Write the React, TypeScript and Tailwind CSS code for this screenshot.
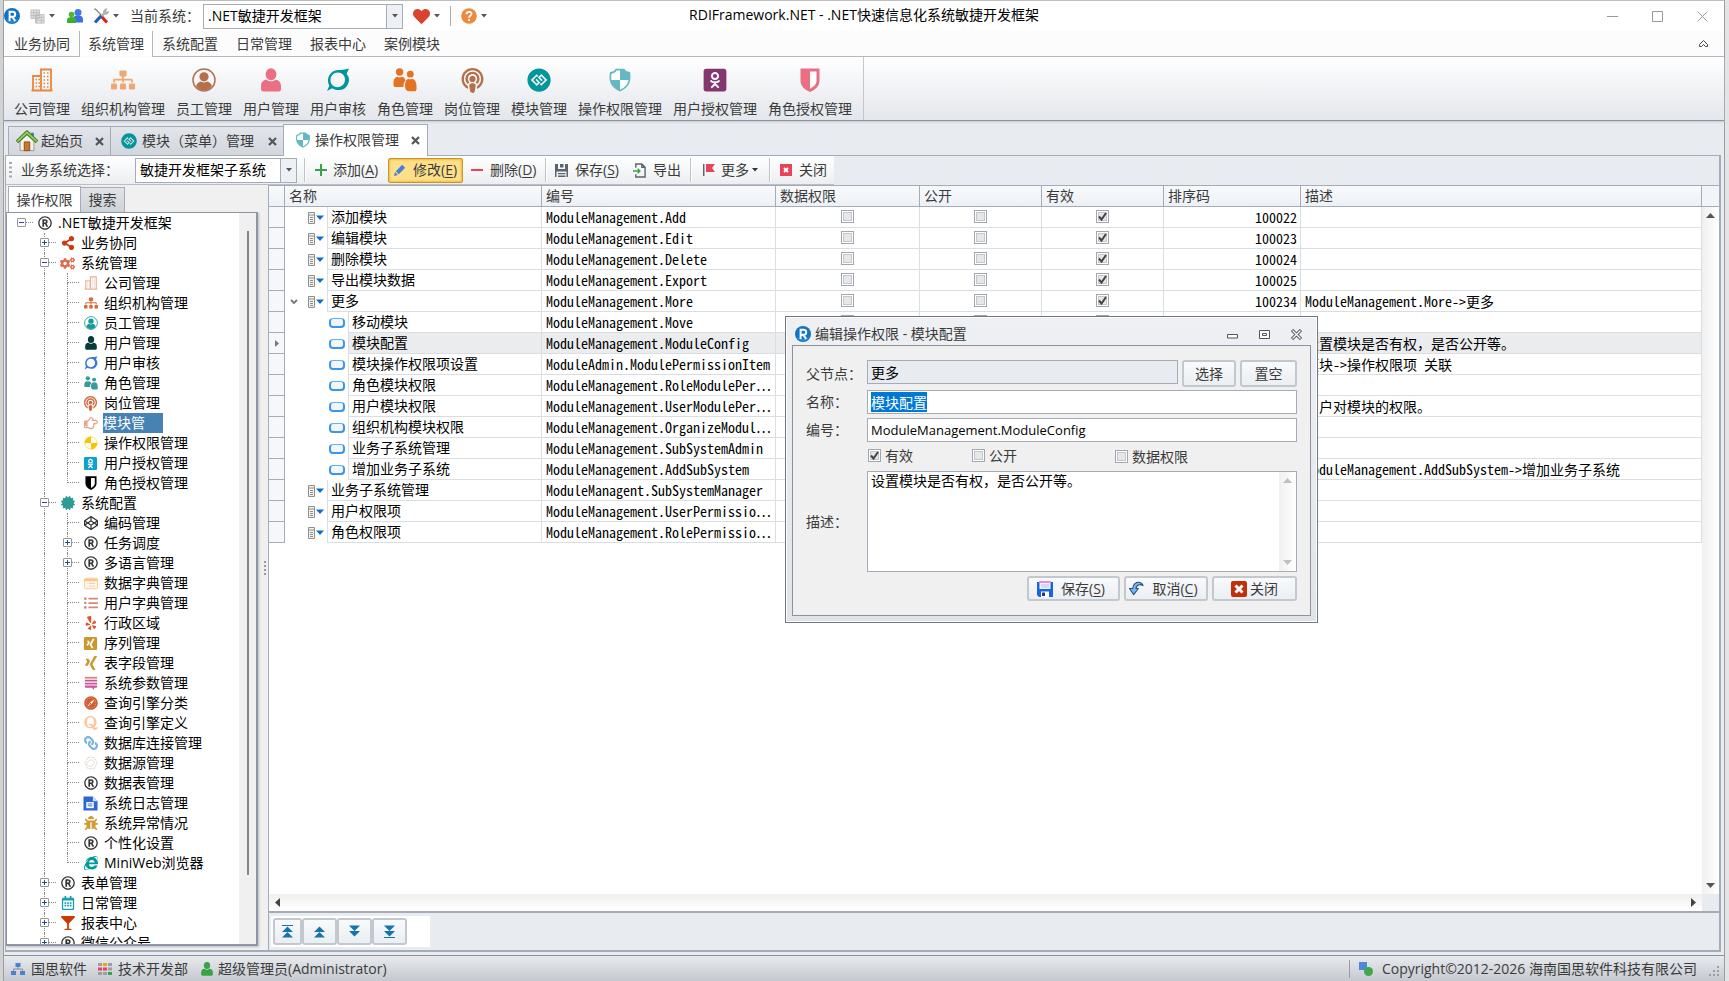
import React, { useEffect, useRef } from "react";
import {
  FaBug, FaCertificate, FaCodepen, FaCogs, FaGgCircle, FaGlassMartini, FaHeart, FaInternetExplorer, FaLink,
  FaListUl, FaOdnoklassnikiSquare, FaPodcast, FaQuora, FaRegCalendarAlt, FaRegHandPointRight, FaRegRegistered,
  FaSafari, FaShareAlt, FaSitemap, FaXing, FaXingSquare, FaYelp,
} from "react-icons/fa";

type P = { className?: string };

/* ---------- icons ---------- */
const Building = ({ className }: P) => (
  <svg viewBox="0 0 24 24" className={className} fill="none" stroke="currentColor" strokeWidth="1.8">
    <path d="M3 22.5V8h8M11 22.5V1.500h10V22.500M1.500 22.500h21" />
    <path strokeWidth="1.6" d="M5.500 11.500h1.500M8.500 11.500h1.500M5.500 15h1.500M8.500 15h1.500M5.500 18.500h1.500M8.500 18.500h1.500M13.500 5h1.500M17 5h1.500M13.500 8.500h1.500M17 8.500h1.500M13.500 12h1.500M17 12h1.500M13.500 15.500h1.500M17 15.500h1.500M13.500 19h1.500M17 19h1.500" />
  </svg>
);
const UserRing = ({ className }: P) => (
  <svg viewBox="0 0 24 24" className={className} fill="currentColor">
    <circle cx="12" cy="12" r="11" fill="none" stroke="currentColor" strokeWidth="1.500" />
    <circle cx="12" cy="8.800" r="4.600" />
    <path d="M4 18c1-3 3-4.300 5-4.600 2 1.500 4 1.500 6 0 2 .3 4 1.600 5 4.600-2 3-5 4.500-8 4.500S6 21 4 18z" />
  </svg>
);
const Person = ({ className }: P) => (
  <svg viewBox="0 0 24 24" className={className} fill="currentColor">
    <ellipse cx="12" cy="6.200" rx="5.400" ry="6" />
    <path d="M2 21v-3c0-4 2.500-6.300 5.500-6.300 2.700 2 6.300 2 9 0 3 0 5.500 2.300 5.500 6.300v3c0 1.700-1 2.500-2.500 2.500h-15C3 23.500 2 22.700 2 21z" />
  </svg>
);
const Swirl = ({ className }: P) => (
  <svg viewBox="0 0 24 24" className={className} fill="currentColor">
    <path fillRule="evenodd" d="M23 .5l-2.400 5.200A10 10 0 0 1 12 22c-2.200 0-4.200-.7-5.800-1.800L1 23l2.300-5.300A10.500 10.500 0 0 1 12 2c3 0 7-.2 11-1.500zM12 4.600c-4.500 0-7.500 3.500-7.500 7.600 0 4 3 7 7 7 4.300 0 7.500-3.400 7.500-7.600 0-4-3-7-7-7z" />
  </svg>
);
const TwoPeople = ({ className }: P) => (
  <svg viewBox="0 0 24 24" className={className} fill="currentColor">
    <circle cx="6.600" cy="4" r="3.700" />
    <circle cx="17.300" cy="6.200" r="3.400" />
    <path d="M.5 15c0-4 2-6 4-6.200 1.300.9 2.900.9 4.200 0 2 .2 3.300 1.600 3.800 3.600-1.500 1.500-2 3.300-2 6.600H2.500c-1.300 0-2-.7-2-2zM12 18c0-4.200 1.600-6.800 3.500-7.200 1.200.7 2.500.7 3.600 0 2.600.6 4.400 3 4.400 7.200v3c0 1.500-.8 2.300-2.200 2.300h-4.800C13.500 23.300 12 21.500 12 18z" />
  </svg>
);
const ShieldQuarter = ({ className }: P) => (
  <svg viewBox="0 0 24 24" className={className}>
    <path d="M7.500.8h9c.6 1.800 2 2.900 5.500 3.300 1.500 8 0 15.400-10 19.400C2 19.500.5 12.100 2 4.100 5.500 3.700 6.900 2.600 7.500.8z" fill="currentColor" />
    <path d="M12 2.500H8.500C7.800 4.200 6.300 5.300 3.500 5.700c-.4 2.200-.4 4.200-.1 6.300H12zM12 12v9.700c4.700-2 7.700-5.200 8.500-9.700z" fill="#fff" />
  </svg>
);
const CheckerBall = ({ className }: P) => (
  <svg viewBox="0 0 24 24" className={className}>
    <circle cx="12" cy="12" r="10.500" fill="#fff" stroke="currentColor" />
    <path d="M12 1v11H1A11 11 0 0 1 12 1zM12 23V12h11a11 11 0 0 1-11 11z" fill="currentColor" />
  </svg>
);
const HalfShield = ({ className }: P) => (
  <svg viewBox="0 0 24 24" className={className}>
    <path d="M2.500.5h19V13c0 5-4 8.500-9.500 11C6.500 21.500 2.500 18 2.500 13z" fill="currentColor" />
    <path d="M12 3.500h6.500V13c0 3.200-2.500 5.700-6.500 7.700z" fill="#fff" />
  </svg>
);
const DictWindow = ({ className }: P) => (
  <svg viewBox="0 0 16 16" className={className}>
    <rect x=".5" y="2.500" width="15" height="12" rx="1" fill="#fff8ee" stroke="#fbc58e" />
    <path d="M1 3h14v3H1z" fill="#fbc58e" />
    <path d="M3 8.500h1M5.500 8.500h7.500M3 11.500h1M5.500 11.500h7.500" stroke="#fbc58e" />
  </svg>
);
const Stack = ({ className }: P) => (
  <svg viewBox="0 0 16 16" className={className} fill="#c9569a">
    <path d="M1 1h14v2H1z" fill="#e0807c" /><path d="M1 4.300h14v2H1zM1 7.600h14v2H1zM1 10.900h14v1.300c0 .8-.6 1.200-1.500 1.200H12L10.500 16 9.500 13.400H2.500C1.600 13.400 1 13 1 12.200z" />
  </svg>
);
const Hexes = ({ className }: P) => (
  <svg viewBox="0 0 16 16" className={className} fill="none" stroke="#d8d0c6">
    <path strokeDasharray="3 1" d="M4.500 1.500h7L15 8l-3.500 6.500h-7L1 8z" /><path strokeWidth=".7" d="M5 6l4-2 3 3-2 4-4 1-3-3z" />
  </svg>
);
const LogFile = ({ className }: P) => (
  <svg viewBox="0 0 16 16" className={className}>
    <path d="M.5.500h10L15.500 5.500v10H.5z" fill="#2c66d0" /><path d="M10.500.500L15.500 5.500h-5z" fill="#cfe0ff" />
    <path d="M3.500 6.500h8v6.500h-8z" fill="#fff" /><path d="M5 8.500h5M5 10.500h5" stroke="#2c66d0" />
  </svg>
);
const LogoR = ({ className }: P) => (
  <svg viewBox="0 0 16 16" className={className}>
    <circle cx="8" cy="8" r="8" fill="#1173c4" />
    <path d="M2 11a7 7 0 0 0 12 0 8 8 0 0 1-12 0z" fill="#4db5f2" />
    <path d="M5.600 13V3.800h3.100a2.500 2.500 0 0 1 0 5H5.600M8.200 8.800l3 4" fill="none" stroke="#fff" strokeWidth="2" />
  </svg>
);
const Floppy = ({ className }: P) => (
  <svg viewBox="0 0 16 16" className={className}>
    <path d="M0 1h16v15H2l-2-2z" fill="#1668d8" /><path d="M2.500 0h11v8h-11z" fill="#f4f2fd" /><path d="M2 0h12v2H2z" fill="#e88fe4" />
    <path d="M4 4h8M4 6h8" stroke="#b9c2e2" /><path d="M4 10.500h8V16H4z" fill="#fff" /><path d="M5 11.500h3V15H5z" fill="#1b3d86" />
  </svg>
);
const Home = ({ className }: P) => (
  <svg viewBox="0 0 24 24" className={className}>
    <path d="M16.500 3h3v6h-3z" fill="#4f6fae" /><path d="M4.500 12L12 5l7.500 7v10.500h-15z" fill="#f5f2ec" stroke="#9c9384" />
    <path d="M9 13h6v9.500H9z" fill="#c8792c" stroke="#7f4b1c" /><path d="M1 13L12 2.500 23 13" fill="none" stroke="#3f7f22" strokeWidth="4.200" strokeLinejoin="round" /><path d="M1.500 12.500L12 2.500l10.500 10" fill="none" stroke="#97cf5a" strokeWidth="2" strokeLinejoin="round" />
  </svg>
);

const Caret = ({ className = "text-[#555]" }: P) => (
  <svg viewBox="0 0 6 4" className={`h-[4px] w-[6px] shrink-0 ${className}`}><path d="M0 0h6L3 3.500z" fill="currentColor" /></svg>
);
const TabClose = () => (
  <button aria-label="关闭标签" className="ml-auto"><svg viewBox="0 0 9 9" className="size-[9px]"><path d="M1 1l7 7M8 1L1 8" stroke="#50555e" strokeWidth="2.200" /></svg></button>
);
const Sep = () => <span className="h-[24px] w-[2px] border-l border-[#bfc3ca] bg-white" />;

/* ---------- form bits ---------- */
function Check({ checked, label }: { checked?: boolean; label?: string }) {
  return (
    <label className="inline-flex items-center gap-1">
      <span className="relative inline-grid size-[13px]">
        <input type="checkbox" aria-label={label ?? "选择"} defaultChecked={checked}
          className="size-[13px] appearance-none border border-[#a0a6b4] bg-[#e6e7e9] shadow-[inset_0_0_0_1px_#fff,inset_0_0_0_2px_#c6c6c2]" />
        {checked && (
          <svg viewBox="0 0 13 13" className="pointer-events-none absolute inset-0 size-[13px]"><path d="M3 6.500l2.500 3L10 3" fill="none" stroke="#444" strokeWidth="2" /></svg>
        )}
      </span>
      {label && <span>{label}</span>}
    </label>
  );
}
function Combo({ value, label, className }: { value: string; label: string; className: string }) {
  return (
    <span className={`flex h-[25px] border border-[#a5abb7] bg-white ${className}`}>
      <select aria-label={label} className="min-w-0 flex-1 appearance-none truncate pl-1 text-black outline-none"><option>{value}</option></select>
      <span className="flex w-[16px] items-center justify-center border-l border-[#a5abb7] bg-[#edf0f4]"><Caret /></span>
    </span>
  );
}
const Key = ({ k }: { k: string }) => <>(<u className="underline-offset-2">{k}</u>)</>;

/* ---------- data ---------- */
const menu = ["业务协同", "系统管理", "系统配置", "日常管理", "报表中心", "案例模块"];
const ribbon: [string, React.ReactNode][] = [
  ["公司管理", <Building className="size-[24px] text-[#e8873a]" />],
  ["组织机构管理", <FaSitemap className="size-[24px] text-[#f0a873]" />],
  ["员工管理", <UserRing className="size-[24px] text-[#b4704a]" />],
  ["用户管理", <Person className="size-[24px] text-[#eb6f83]" />],
  ["用户审核", <Swirl className="size-[24px] text-[#00969b]" />],
  ["角色管理", <TwoPeople className="size-[24px] text-[#e37222]" />],
  ["岗位管理", <FaPodcast className="size-[25px] text-[#b4704a]" />],
  ["模块管理", <FaGgCircle className="size-[24px] text-[#00969b]" />],
  ["操作权限管理", <ShieldQuarter className="size-[24px] text-[#63b9c1]" />],
  ["用户授权管理", <FaOdnoklassnikiSquare className="size-[26px] text-[#84366f]" />],
  ["角色授权管理", <HalfShield className="size-[24px] text-[#eb6f83]" />],
];
const Reg = () => <FaRegRegistered className="size-[14px] text-[#333]" />;
type Node = { t: string; l: 0 | 1 | 2; i: React.ReactNode; e?: "+" | "-"; last?: boolean; sel?: boolean };
const tree: Node[] = [
  { t: ".NET敏捷开发框架", l: 0, e: "-", i: <Reg /> },
  { t: "业务协同", l: 1, e: "+", i: <FaShareAlt className="size-[14px] text-[#cc3a14]" /> },
  { t: "系统管理", l: 1, e: "-", i: <FaCogs className="size-[15px] text-[#e0694a]" /> },
  { t: "公司管理", l: 2, i: <Building className="size-[14px] text-[#e6ae92]" /> },
  { t: "组织机构管理", l: 2, i: <FaSitemap className="size-[14px] text-[#d8693a]" /> },
  { t: "员工管理", l: 2, i: <UserRing className="size-[14px] text-[#1a9a9a]" /> },
  { t: "用户管理", l: 2, i: <Person className="size-[14px] text-[#063a3c]" /> },
  { t: "用户审核", l: 2, i: <Swirl className="size-[14px] text-[#3a78d4]" /> },
  { t: "角色管理", l: 2, i: <TwoPeople className="size-[14px] text-[#359b9b]" /> },
  { t: "岗位管理", l: 2, i: <FaPodcast className="size-[15px] text-[#cf6c44]" /> },
  { t: "模块管", l: 2, sel: true, i: <FaRegHandPointRight className="size-[14px] text-[#e6a68c]" /> },
  { t: "操作权限管理", l: 2, i: <CheckerBall className="size-[14px] text-[#fbc400]" /> },
  { t: "用户授权管理", l: 2, i: <FaOdnoklassnikiSquare className="size-[15px] text-[#10a0d0]" /> },
  { t: "角色授权管理", l: 2, last: true, i: <HalfShield className="size-[14px] text-black" /> },
  { t: "系统配置", l: 1, e: "-", i: <FaCertificate className="size-[14px] text-[#2f9a96]" /> },
  { t: "编码管理", l: 2, i: <FaCodepen className="size-[14px] text-[#333]" /> },
  { t: "任务调度", l: 2, e: "+", i: <Reg /> },
  { t: "多语言管理", l: 2, e: "+", i: <Reg /> },
  { t: "数据字典管理", l: 2, i: <DictWindow className="size-[14px]" /> },
  { t: "用户字典管理", l: 2, i: <FaListUl className="size-[14px] text-[#cf8a78]" /> },
  { t: "行政区域", l: 2, i: <FaYelp className="size-[14px] text-[#e2552c]" /> },
  { t: "序列管理", l: 2, i: <FaXingSquare className="size-[15px] text-[#cc982c]" /> },
  { t: "表字段管理", l: 2, i: <FaXing className="size-[16px] text-[#cc982c]" /> },
  { t: "系统参数管理", l: 2, i: <Stack className="size-[14px]" /> },
  { t: "查询引擎分类", l: 2, i: <FaSafari className="size-[14px] text-[#cf5c30]" /> },
  { t: "查询引擎定义", l: 2, i: <FaQuora className="size-[16px] text-[#fbc79c]" /> },
  { t: "数据库连接管理", l: 2, i: <FaLink className="size-[14px] -scale-x-100 text-[#78b4e0]" /> },
  { t: "数据源管理", l: 2, i: <Hexes className="size-[14px]" /> },
  { t: "数据表管理", l: 2, i: <Reg /> },
  { t: "系统日志管理", l: 2, i: <LogFile className="size-[15px]" /> },
  { t: "系统异常情况", l: 2, i: <FaBug className="size-[14px] text-[#d09a34]" /> },
  { t: "个性化设置", l: 2, i: <Reg /> },
  { t: "MiniWeb浏览器", l: 2, last: true, i: <FaInternetExplorer className="size-[14px] text-[#009a9a]" /> },
  { t: "表单管理", l: 1, e: "+", i: <Reg /> },
  { t: "日常管理", l: 1, e: "+", i: <FaRegCalendarAlt className="size-[14px] text-[#18a2b0]" /> },
  { t: "报表中心", l: 1, e: "+", i: <FaGlassMartini className="size-[14px] text-[#cc3a00]" /> },
  { t: "微信公众号", l: 1, e: "+", i: <Reg /> },
];
type Row = { n: string; c: string; s?: number; d?: string; child?: boolean; open?: boolean; on?: boolean };
const rows: Row[] = [
  { n: "添加模块", c: "ModuleManagement.Add", s: 100022 },
  { n: "编辑模块", c: "ModuleManagement.Edit", s: 100023 },
  { n: "删除模块", c: "ModuleManagement.Delete", s: 100024 },
  { n: "导出模块数据", c: "ModuleManagement.Export", s: 100025 },
  { n: "更多", c: "ModuleManagement.More", s: 100234, d: "ModuleManagement.More->更多", open: true },
  { n: "移动模块", c: "ModuleManagement.Move", child: true },
  { n: "模块配置", c: "ModuleManagement.ModuleConfig", child: true, on: true, d: "设置模块是否有权，是否公开等。" },
  { n: "模块操作权限项设置", c: "ModuleAdmin.ModulePermissionItem", child: true, d: "模块->操作权限项 关联" },
  { n: "角色模块权限", c: "ModuleManagement.RoleModulePer…", child: true },
  { n: "用户模块权限", c: "ModuleManagement.UserModulePer…", child: true, d: "用户对模块的权限。" },
  { n: "组织机构模块权限", c: "ModuleManagement.OrganizeModul…", child: true },
  { n: "业务子系统管理", c: "ModuleManagement.SubSystemAdmin", child: true },
  { n: "增加业务子系统", c: "ModuleManagement.AddSubSystem", child: true, d: "ModuleManagement.AddSubSystem->增加业务子系统" },
  { n: "业务子系统管理", c: "ModuleManagent.SubSystemManager" },
  { n: "用户权限项", c: "ModuleManagement.UserPermissio…" },
  { n: "角色权限项", c: "ModuleManagement.RolePermissio…" },
];

/* ---------- tree ---------- */
const dot = "border-dotted border-[#888]";
function Joint({ e, top = true, bottom = true }: { e?: string; top?: boolean; bottom?: boolean }) {
  return (
    <span className="relative grid h-full w-[23px] shrink-0 grid-cols-[11px_12px] grid-rows-2">
      <span />
      <span className={`border-b ${dot} ${top ? "border-l" : ""}`} />
      <span />
      <span className={`${dot} ${bottom ? "border-l" : ""}`} />
      {e && (
        <button aria-label="展开或折叠" className="absolute top-[5px] left-[7px] size-[9px] rounded-[1px] border border-[#969696] bg-white">
          <svg viewBox="0 0 7 7" className="size-[7px]"><path d={e === "+" ? "M1 3.500h5M3.500 1v5" : "M1 3.500h5"} stroke="#2b4a9b" /></svg>
        </button>
      )}
    </span>
  );
}
function Tree() {
  return (
    <ul className="min-h-0 min-w-0 flex-1 overflow-hidden pl-[3px]">
      {tree.map((n, i) => (
        <li key={i} className="flex h-[20px] items-center text-black">
          {n.l === 0 && <Joint e={n.e} top={false} bottom={false} />}
          {n.l > 0 && <span className="w-[23px] shrink-0" />}
          {n.l === 1 && <Joint e={n.e} />}
          {n.l === 2 && <span className="flex h-full w-[23px] shrink-0 justify-end"><span className={`w-[12px] border-l ${dot}`} /></span>}
          {n.l === 2 && <Joint e={n.e} bottom={!n.last} />}
          <span className="flex w-[23px] shrink-0 justify-center">{n.i}</span>
          {n.sel ? (
            <span className="ml-px h-[20px] w-[60px] bg-[#4682b4] text-white">{n.t}</span>
          ) : (
            <span className="ml-[2px] whitespace-nowrap">{n.t}</span>
          )}
        </li>
      ))}
    </ul>
  );
}

/* ---------- grid ---------- */
const ListIcon = () => (
  <svg viewBox="0 0 16 12" className="h-[12px] w-[16px] shrink-0">
    <path d="M.5.500h6v11h-6zM.5 3h6M2 5.500h3M2 7.500h3M2 9.500h3" fill="#f2f2f2" stroke="#8e8e8e" /><path d="M8 3.500H16L12 8z" fill="#0a6ed0" />
  </svg>
);
const PillIcon = () => <span className="h-[10px] w-[16px] shrink-0 rounded-[4px] border-2 border-t-1 border-[#3a96e8] border-t-[#5fb4f6] bg-[#f2f5fa]" />;

function Grid() {
  const h = "border-r border-b border-[#a5abb7] bg-linear-to-b from-[#f8f9fb] to-[#edf1f6] pl-1 text-left font-normal text-[#3b3b3b]";
  const c = "border-r border-b border-[#dadde1] p-0";
  const mono = "font-['Noto_Sans_Mono_CJK_JP','Noto_Sans_Mono_CJK_SC',monospace]";
  const sc = "font-['Noto_Sans_Mono_CJK_SC','Noto_Sans_CJK_SC',monospace]";
  return (
    <div className="flex min-h-0 flex-1">
      <div className="min-w-0 flex-1 overflow-hidden bg-white">
        <table className="w-full table-fixed border-separate border-spacing-0">
          <colgroup>
            <col className="w-[16px]" /><col className="w-[257px]" /><col className="w-[234px]" /><col className="w-[144px]" />
            <col className="w-[122px]" /><col className="w-[122px]" /><col className="w-[137px]" /><col />
          </colgroup>
          <thead>
            <tr className="h-[21px] leading-[18px]">
              <th className={h} aria-label="行标记" /><th className={h}>名称</th><th className={h}>编号</th><th className={h}>数据权限</th>
              <th className={h}>公开</th><th className={h}>有效</th><th className={h}>排序码</th><th className={h}>描述</th>
            </tr>
          </thead>
          <tbody className="leading-[18px] text-black">
            {rows.map((r, i) => {
              const bg = r.on ? "bg-[#ebecee]" : "";
              return (
                <tr key={i} className="h-[21px]">
                  <td className="border-r border-b border-[#a5abb7] bg-[#f5f7fa] p-0">
                    {r.on && <svg viewBox="0 0 4 7" className="mx-auto h-[7px] w-[4px]"><path d="M0 0l4 3.500L0 7z" fill="#777" /></svg>}
                  </td>
                  <td className="border-r border-[#dadde1] p-0">
                    <div className="flex h-[21px]">
                      <span className={`flex shrink-0 items-center justify-end ${r.child ? "w-[63px] pr-[3px]" : "w-[42px] pr-[3px]"}`}>
                        {r.open && <svg viewBox="0 0 8 6" className="mr-[10px] h-[6px] w-[8px]"><path d="M1 1l3 3 3-3" fill="none" stroke="#777" strokeWidth="1.800" /></svg>}
                        {r.child ? <PillIcon /> : <ListIcon />}
                      </span>
                      <span className={`flex-1 border-b border-l border-[#dadde1] pl-[3px] leading-[20px] whitespace-nowrap ${bg}`}>{r.n}</span>
                    </div>
                  </td>
                  <td className={`${c} ${bg} ${mono} overflow-hidden pl-1 whitespace-nowrap`}>{r.c}</td>
                  <td className={`${c} ${bg} text-center leading-none`}><Check /></td>
                  <td className={`${c} ${bg} text-center leading-none`}><Check /></td>
                  <td className={`${c} ${bg} text-center leading-none`}><Check checked /></td>
                  <td className={`${c} ${bg} ${sc} pr-[3px] text-right`}>{r.s}</td>
                  <td className={`${c} ${bg} ${sc} pl-1 whitespace-nowrap`}>{r.d}</td>
                </tr>
              );
            })}
          </tbody>
        </table>
      </div>
      <div className="flex w-[17px] flex-col bg-linear-to-r from-[#f0f0f0] to-white">
        <span className="h-[21px] border-b border-[#a5abb7] bg-[#f1f4f8]" />
        <svg viewBox="0 0 9 5" className="mx-auto mt-[6px] h-[5px] w-[9px]"><path d="M0 5h9L4.500 0z" fill="#555" /></svg>
        <svg viewBox="0 0 9 5" className="mx-auto mt-auto mb-[6px] h-[5px] w-[9px]"><path d="M0 0h9L4.500 5z" fill="#555" /></svg>
      </div>
    </div>
  );
}

function NavBar() {
  const b = "flex h-[27px] items-center justify-center rounded-[3px] border-2 border-[#c3c7ce] bg-linear-to-b from-[#f8fafc] to-[#ebeef2]";
  const up = "M5.500 0l5.500 5.500H0zM5.500 5.500L11 11H0z";
  return (
    <div className="h-[39px] border-t-2 border-[#a5abb7] bg-[#e8ebf0] pt-[3px] pl-[2px]">
      <div className="flex h-[31px] w-[159px] items-center bg-white pl-[2px]">
        {[["首行", up, true], ["上一行", up, false], ["下一行", up, false], ["末行", up, true]].map(([t, d, bar], i) => (
          <button key={i} aria-label={t as string} className={`${b} ${i === 0 ? "w-[29px]" : "w-[35px]"}`}>
            <svg viewBox="0 0 11 13" className={`h-[13px] w-[11px] ${i > 1 ? "rotate-180" : ""}`} fill="#1673ac">
              {bar && <path d="M0 0h11v1H0z" />}
              <path transform="translate(0 1.500)" d={d as string} />
            </svg>
          </button>
        ))}
      </div>
    </div>
  );
}

/* ---------- dialog ---------- */
function Dialog() {
  const name = useRef<HTMLInputElement>(null);
  useEffect(() => { name.current?.focus(); name.current?.select(); }, []);
  const f = "h-[24px] border border-[#a5abb7] bg-white px-[3px] text-black outline-none selection:bg-[#0078d7] selection:text-white";
  const b = "flex items-center justify-center rounded-[3px] border-2 border-[#c3c7ce] bg-linear-to-b from-[#f8fafc] to-[#ebeef2]";
  return (
    <div role="dialog" aria-label="编辑操作权限" className="absolute top-[316px] left-[785px] w-[533px] border border-[#71767f] bg-linear-to-b from-[#eef0f4] to-[#e0e4e9] px-[6px] pb-[6px] text-[#3b3b3b] shadow-[inset_0_0_0_1px_#fff]">
      <div className="flex h-[28px] items-center pt-[6px] pr-[9px] pl-[3px]">
        <LogoR className="size-[16px]" />
        <span className="ml-1">编辑操作权限 - 模块配置</span>
        <span className="ml-auto flex items-center gap-[21px]">
          <button aria-label="最小化"><svg viewBox="0 0 11 11" className="size-[11px]"><path d="M.5 5.500h10v3.500H.5z" fill="#fff" stroke="#555" /></svg></button>
          <button aria-label="最大化"><svg viewBox="0 0 11 11" className="size-[11px]"><path d="M.5 1.500h10v8H.5zM3.500 4.500h4v2h-4z" fill="#fff" stroke="#555" /></svg></button>
          <button aria-label="关闭窗口"><svg viewBox="0 0 11 11" className="size-[11px]"><path d="M1 1l9 9M10 1l-9 9" stroke="#555" strokeWidth="3.200" /><path d="M1.500 1.500l8 8M9.500 1.500l-8 8" stroke="#fff" strokeWidth="1.200" /></svg></button>
        </span>
      </div>
      <form className="grid grid-cols-[61px_1fr] items-center border border-[#8d929b] bg-[#f0f0f0] pt-[14px] pr-[13px] pb-[14px] pl-[13px]">
        <label htmlFor="parent">父节点：</label>
        <div className="flex items-start gap-1">
          <input id="parent" readOnly defaultValue="更多" className="h-[24px] min-w-0 flex-1 border border-[#a5abb7] bg-[#e8ebf0] px-[3px] text-black" />
          <button type="button" className={`${b} h-[27px] w-[54px]`}>选择</button>
          <button type="button" className={`${b} h-[27px] w-[57px]`}>置空</button>
        </div>
        <label htmlFor="name" className="mt-[3px]">名称：</label>
        <input id="name" ref={name} defaultValue="模块配置" className={`${f} mt-[3px]`} />
        <label htmlFor="code" className="mt-1">编号：</label>
        <input id="code" defaultValue="ModuleManagement.ModuleConfig" className={`${f} mt-1 text-[13px]`} />
        <div className="col-start-2 flex h-[29px] items-center pl-px">
          <span className="w-[104px]"><Check checked label="有效" /></span>
          <span className="w-[143px]"><Check label="公开" /></span>
          <Check label="数据权限" />
        </div>
        <label htmlFor="desc">描述：</label>
        <div className="flex h-[101px] border border-[#a5abb7] bg-white">
          <textarea id="desc" defaultValue="设置模块是否有权，是否公开等。" className="flex-1 resize-none overflow-hidden px-[3px] leading-[18px] text-black outline-none" />
          <div className="flex w-[17px] flex-col items-center justify-between bg-linear-to-r from-[#f0f0f0] to-white py-[6px]">
            <svg viewBox="0 0 9 5" className="h-[5px] w-[9px]"><path d="M0 5h9L4.500 0z" fill="#c0c0c0" /></svg>
            <svg viewBox="0 0 9 5" className="h-[5px] w-[9px]"><path d="M0 0h9L4.500 5z" fill="#c0c0c0" /></svg>
          </div>
        </div>
        <div className="col-start-2 mt-1 flex justify-end gap-1">
          <button type="button" className={`${b} h-[25px] w-[93px] gap-2 pr-[5px]`}><Floppy className="size-[16px]" /><span>保存<Key k="S" /></span></button>
          <button type="button" className={`${b} h-[25px] w-[84px] gap-2 pr-[5px]`}>
            <svg viewBox="0 0 16 16" className="size-[15px]">
              <path d="M4 8C4 3.500 7.500 1 11.500 1.500c2 .3 3 1.500 3.500 3.500-1.500-1-2.500-1.500-4-1-2.500.700-3.500 2.500-3.500 4H10L5 14.500.5 8z" fill="#7db4ec" stroke="#24507f" strokeWidth="1.100" strokeLinejoin="round" />
            </svg>
            <span>取消<Key k="C" /></span>
          </button>
          <button type="button" className={`${b} h-[25px] w-[85px] gap-[3px]`}>
            <svg viewBox="0 0 16 16" className="size-[16px]"><rect width="16" height="16" rx="2" fill="#c22f08" /><path d="M4.500 4.500l7 7M11.500 4.500l-7 7" stroke="#fff" strokeWidth="3" /></svg>关闭
          </button>
        </div>
      </form>
    </div>
  );
}

/* ---------- page ---------- */
export default function App() {
  return (
    <div className="relative flex h-screen overflow-hidden bg-[#d2d2d2] font-['Open_Sans','Noto_Sans_CJK_SC',sans-serif] text-[14px] leading-[20px] text-[#3b3b3b]">
      <div className="ml-[3px] flex min-w-0 flex-1 flex-col border-x border-t border-[#9a9da3] border-t-[#bdbdbd] bg-[#e8ebf0]">
        <header className="relative flex h-[30px] shrink-0 items-center bg-white text-[#3b3b3b]">
          <LogoR className="size-[16px]" />
          <svg viewBox="0 0 16 16" className="ml-[10px] size-[15px]"><path d="M1 1h9v9H1zM6 6h9v9H6zM1 4h9M1 7h9M4 1v9M7 1v14M6 9h9M6 12h9M12 6v9" fill="#e6e6e6" stroke="#bbb" /></svg>
          <span className="mr-3 ml-1 flex"><Caret /></span>
          <svg viewBox="0 0 16 16" className="size-[16px]"><circle cx="11" cy="4.500" r="3.500" fill="#3d7be8" /><path d="M6 14.500V11c0-2.500 2-3.500 5-3.500s5 1 5 3.500v3.500z" fill="#3d6fe0" /><circle cx="4.500" cy="6.500" r="2.800" fill="#4cb82e" /><path d="M0 15v-3c0-2 1.800-3 4.500-3s4.500 1 4.500 3v3z" fill="#3cae30" /></svg>
          <svg viewBox="0 0 16 16" className="ml-[10px] size-[16px]"><path d="M1 1.500l1.500-.5L8 7" fill="none" stroke="#888" strokeWidth="1.200" /><path d="M8.500 8.500l5.500 6" stroke="#d0281e" strokeWidth="3.200" /><path d="M2 14.500l6.500-7" stroke="#2458b8" strokeWidth="3.200" /><path d="M8 7.500l2.500-2.800A3.300 3.300 0 0 1 14 .8l-1.500 2.200 1 1.200 2.200-.8a3.200 3.200 0 0 1-4 2.800L9.200 8.800z" fill="#b5b5b5" stroke="#888" strokeWidth=".5" /></svg>
          <span className="ml-1 flex"><Caret /></span>
          <span className="ml-[11px] w-[73px] whitespace-nowrap">当前系统：</span>
          <Combo label="当前系统" value=".NET敏捷开发框架" className="w-[200px]" />
          <FaHeart className="ml-[10px] size-[17px] text-[#d9432f]" /><span className="ml-1 flex"><Caret /></span>
          <span className="mx-[10px] h-[20px] w-px bg-[#a9a9a9]" />
          <svg viewBox="0 0 16 16" className="size-[16px]"><circle cx="8" cy="8" r="7.800" fill="#f0893c" /><path d="M5.500 6.200C5.500 3 10.500 3 10.500 6c0 1.800-2.500 1.800-2.500 3.700M8 11v2" fill="none" stroke="#fff" strokeWidth="1.800" /></svg>
          <span className="ml-1 flex"><Caret /></span>
          <h1 className="pointer-events-none absolute inset-x-0 top-1 text-center text-black">RDIFramework.NET - .NET快速信息化系统敏捷开发框架</h1>
          <span className="mr-[16px] ml-auto flex gap-[34px] text-[#999]">
            <button aria-label="最小化"><svg viewBox="0 0 11 11" className="size-[11px]"><path d="M0 5.500h11" stroke="currentColor" /></svg></button>
            <button aria-label="最大化"><svg viewBox="0 0 11 11" className="size-[11px]"><path d="M.5.500h10v10H.5z" fill="none" stroke="currentColor" /></svg></button>
            <button aria-label="关闭"><svg viewBox="0 0 11 11" className="size-[11px]"><path d="M.5.500l10 10M10.500.500l-10 10" stroke="currentColor" /></svg></button>
          </span>
        </header>

        <nav className="flex h-[26px] shrink-0 bg-[#fcfcfc]">
          <span className="w-px border-b border-[#b4b7bd]" />
          {menu.map((m, i) => (
            <a key={m} href="#" className={`flex w-[74px] items-center justify-center ${i === 1 ? "border-x border-[#b4b7bd] bg-white" : "border-b border-[#b4b7bd]"}`}>{m}</a>
          ))}
          <span className="flex flex-1 items-center justify-end border-b border-[#b4b7bd] pr-[15px]">
            <button aria-label="收起功能区"><svg viewBox="0 0 11 9" className="h-[9px] w-[11px]"><path d="M1.500 5.500l4-4 4 4v2h-2l-2-2-2 2h-2z" fill="none" stroke="#444" /></svg></button>
          </span>
        </nav>

        <div className="flex h-[64px] shrink-0 border-b border-[#8d929b] bg-linear-to-b from-white to-[#e3e6eb] shadow-[0_1px_2px_#c4c8ce]">
          <div className="flex gap-[11px] border-r border-[#c3c6cc] pr-[11px] pl-[10px]">
            {ribbon.map(([t, icon]) => (
              <button key={t} className="flex flex-col items-center pt-[9px]">
                <span className="flex h-[28px] items-center">{icon}</span>
                <span className="mt-[5px] leading-[20px]">{t}</span>
              </button>
            ))}
          </div>
        </div>

        <div className="relative z-10 flex h-[35px] shrink-0 items-end pl-1">
          <a href="#" className="mb-px flex h-[29px] w-[103px] items-center border border-b-0 border-[#a5abb7] bg-linear-to-b from-[#e2e5ea] to-[#d3d6dc] pr-[6px] pl-[7px]"><Home className="size-[22px]" /><span className="ml-[3px]">起始页</span><TabClose /></a>
          <a href="#" className="mb-px flex h-[29px] w-[172px] items-center border-t border-[#a5abb7] bg-linear-to-b from-[#e2e5ea] to-[#d3d6dc] pr-[6px] pl-[10px]"><FaGgCircle className="size-[16px] text-[#00969b]" /><span className="ml-[5px]">模块（菜单）管理</span><TabClose /></a>
          <a href="#" className="flex h-[32px] w-[145px] items-center border-x border-t border-[#a5abb7] bg-white pr-[7px] pb-px pl-[11px]"><ShieldQuarter className="size-[16px] text-[#63b9c1]" /><span className="ml-1">操作权限管理</span><TabClose /></a>
        </div>

        <main className="mr-[3px] -mt-px ml-px flex min-h-0 flex-1 flex-col border-t border-r-2 border-b-2 border-l border-[#a5abb7] bg-[#f0f0f0]">
          <div className="h-[29px] shrink-0 bg-[#e8ebf0]">
            <div className="flex h-[29px] w-[828px] items-center border-b border-[#b9bdc5] bg-linear-to-b from-white to-[#eceef1]">
              <svg viewBox="0 0 3 16" className="ml-[3px] h-[16px] w-[3px]" fill="#aaa"><path d="M0 0h3v2H0zM0 4.500h3v2H0zM0 9h3v2H0zM0 13.500h3v2H0z" /></svg>
              <span className="ml-[9px] w-[114px] whitespace-nowrap">业务系统选择：</span>
              <Combo label="业务系统" value="敏捷开发框架子系统" className="w-[162px]" />
              <span className="ml-[7px] flex"><Sep /></span>
              <button className="ml-[9px] flex w-[69px] items-center gap-[6px]"><svg viewBox="0 0 12 12" className="size-[12px]"><path d="M0 6h12M6 0v12" stroke="#37a246" strokeWidth="2" /></svg><span>添加<Key k="A" /></span></button>
              <button className="ml-1 flex h-[25px] w-[75px] items-center gap-[7px] rounded-[2px] border border-[#c9962c] bg-[#ffe08a] pl-[5px] shadow-[inset_0_0_2px_1px_#f5b93c]"><svg viewBox="0 0 12 12" className="size-[12px]"><path d="M0 12l1-4 3 3zM1.800 7.200L8.200.800l3 3L4.800 10.200z" fill="#4a7fd8" /></svg><span>修改<Key k="E" /></span></button>
              <button className="ml-[8px] flex w-[67px] items-center gap-[7px]"><svg viewBox="0 0 12 12" className="size-[12px]"><path d="M0 6h12" stroke="#e8435a" strokeWidth="2" /></svg><span>删除<Key k="D" /></span></button>
              <span className="ml-[7px] flex"><Sep /></span>
              <button className="ml-[8px] flex w-[68px] items-center gap-[7px]"><svg viewBox="0 0 13 13" className="size-[13px]"><path d="M0 0h3v5h7V0h3v13h-1.500V7.500h-10V13H0z" fill="#5c6470" /><path d="M5 0h3.500v3.500H5zM3 9h7.500v1.300H3zM3 11.500h7.500V13H3z" fill="#5c6470" /></svg><span>保存<Key k="S" /></span></button>
              <button className="ml-[10px] flex w-[48px] items-center gap-[7px]"><svg viewBox="0 0 14 16" className="h-[15px] w-[13px]" fill="none"><path d="M3 5V1h6.500L13 4.500V15H3v-3M9.500 1v3.500H13" stroke="#5c6470" strokeWidth="1.500" /><path d="M0 8.500h7M5 6l2.500 2.500L5 11" stroke="#37a246" strokeWidth="1.500" /></svg>导出</button>
              <span className="ml-[9px] flex"><Sep /></span>
              <button className="ml-[11px] flex w-[57px] items-center gap-[6px]"><svg viewBox="0 0 12 12" className="size-[12px]"><path d="M.7 0v12" stroke="#5c6470" strokeWidth="1.500" /><path d="M3 0h9L9 4l3 4H3z" fill="#e8435a" /></svg><span className="flex items-center gap-[3px]">更多<Caret className="text-[#333]" /></span></button>
              <span className="ml-[9px] flex"><Sep /></span>
              <button className="ml-[9px] flex items-center gap-[7px]"><svg viewBox="0 0 12 12" className="size-[12px]"><path d="M0 0h12v12H0z" fill="#e8435a" /><path d="M4 4l4 4M8 4L4 8" stroke="#fff" strokeWidth="1.800" /></svg>关闭</button>
            </div>
          </div>

          <div className="flex min-h-0 flex-1">
            <aside className="flex w-[252px] shrink-0 flex-col pt-px pb-1">
              <div className="flex h-[26px] shrink-0 items-end pl-[2px]">
                <button className="h-[26px] w-[73px] border border-b-0 border-[#a5abb7] bg-white">操作权限</button>
                <button className="h-[25px] w-[44px] border border-b-0 border-l-0 border-[#a5abb7] bg-linear-to-b from-[#e0e3e8] to-[#cfd3d9]">搜索</button>
              </div>
              <div className="flex min-h-0 flex-1 border-2 border-l border-t-1 border-[#8d96a8] bg-white shadow-[1px_1px_2px_#bbb]">
                <Tree />
                <div className="flex w-[17px] shrink-0 justify-center bg-[#f0f0f0] pt-[18px] pb-[69px]"><span className="w-[2px] bg-[#858585]" /></div>
              </div>
            </aside>
            <div className="flex w-[10px] shrink-0 items-center justify-end pr-[2px]">
              <svg viewBox="0 0 2 14" className="h-[14px] w-[2px]" fill="#999"><path d="M0 0h2v2H0zM0 4h2v2H0zM0 8h2v2H0zM0 12h2v2H0z" /></svg>
            </div>
            <section className="flex min-w-0 flex-1 flex-col border-t border-l border-[#a5abb7]">
              <Grid />
              <div className="flex h-[17px] shrink-0 items-center bg-[#e8ebf0]">
                <div className="flex h-full flex-1 items-center justify-between bg-linear-to-b from-[#f0f0f0] to-white px-[6px]">
                  <svg viewBox="0 0 5 9" className="h-[9px] w-[5px]"><path d="M5 0v9L0 4.500z" fill="#444" /></svg>
                  <svg viewBox="0 0 5 9" className="h-[9px] w-[5px]"><path d="M0 0v9l5-4.500z" fill="#444" /></svg>
                </div>
                <span className="w-[17px]" />
              </div>
              <NavBar />
            </section>
          </div>
        </main>

        <footer className="mt-[3px] flex h-[26px] shrink-0 items-center border-t border-[#8d929b] bg-linear-to-b from-[#e8eaee] to-[#c5c9cf] pr-1 pl-[7px]">
          <svg viewBox="0 0 14 12" className="h-[12px] w-[14px]"><path d="M4.500 0h5v4h-5zM0 8h5v4H0zM9 8h5v4H9z" fill="#4f7fd0" /><path d="M7 4v2M2.500 8V6h9v2" fill="none" stroke="#8a8f98" /></svg>
          <span className="ml-[6px]">国思软件</span>
          <svg viewBox="0 0 14 12" className="ml-[11px] h-[12px] w-[14px]"><path d="M0 0h4v3H0zM10 0h4v3h-4zM10 4.500h4v3h-4zM0 9h4v3H0zM5 9h4v3H5z" fill="#9a9fa6" /><path d="M5 0h4v3H5z" fill="#f0a020" /><path d="M0 4.500h4v3H0zM5 4.500h4v3H5z" fill="#e8435a" /><path d="M10 9h4v3h-4z" fill="#37a246" /></svg>
          <span className="ml-[6px]">技术开发部</span>
          <Person className="ml-3 size-[14px] text-[#37a246]" />
          <span className="ml-1">超级管理员(Administrator)</span>
          <span className="ml-auto h-[18px] w-px bg-[#9a9da3]" />
          <svg viewBox="0 0 14 14" className="ml-[9px] size-[14px]"><path d="M0 0h8v8H0z" fill="#4f86d8" /><circle cx="9.500" cy="9.500" r="4.500" fill="#3ea84a" /></svg>
          <span className="ml-[9px]">Copyright©2012-2026 海南国思软件科技有限公司</span>
          <svg viewBox="0 0 11 11" className="mt-[6px] ml-3 size-[11px]" fill="#9a9fa8"><path d="M8 0h2v2H8zM4 4h2v2H4zM8 4h2v2H8zM0 8h2v2H0zM4 8h2v2H4zM8 8h2v2H8z" /></svg>
        </footer>
      </div>
      <div className="w-1 shrink-0 bg-[#e4e4e6]" />
      <Dialog />
    </div>
  );
}
